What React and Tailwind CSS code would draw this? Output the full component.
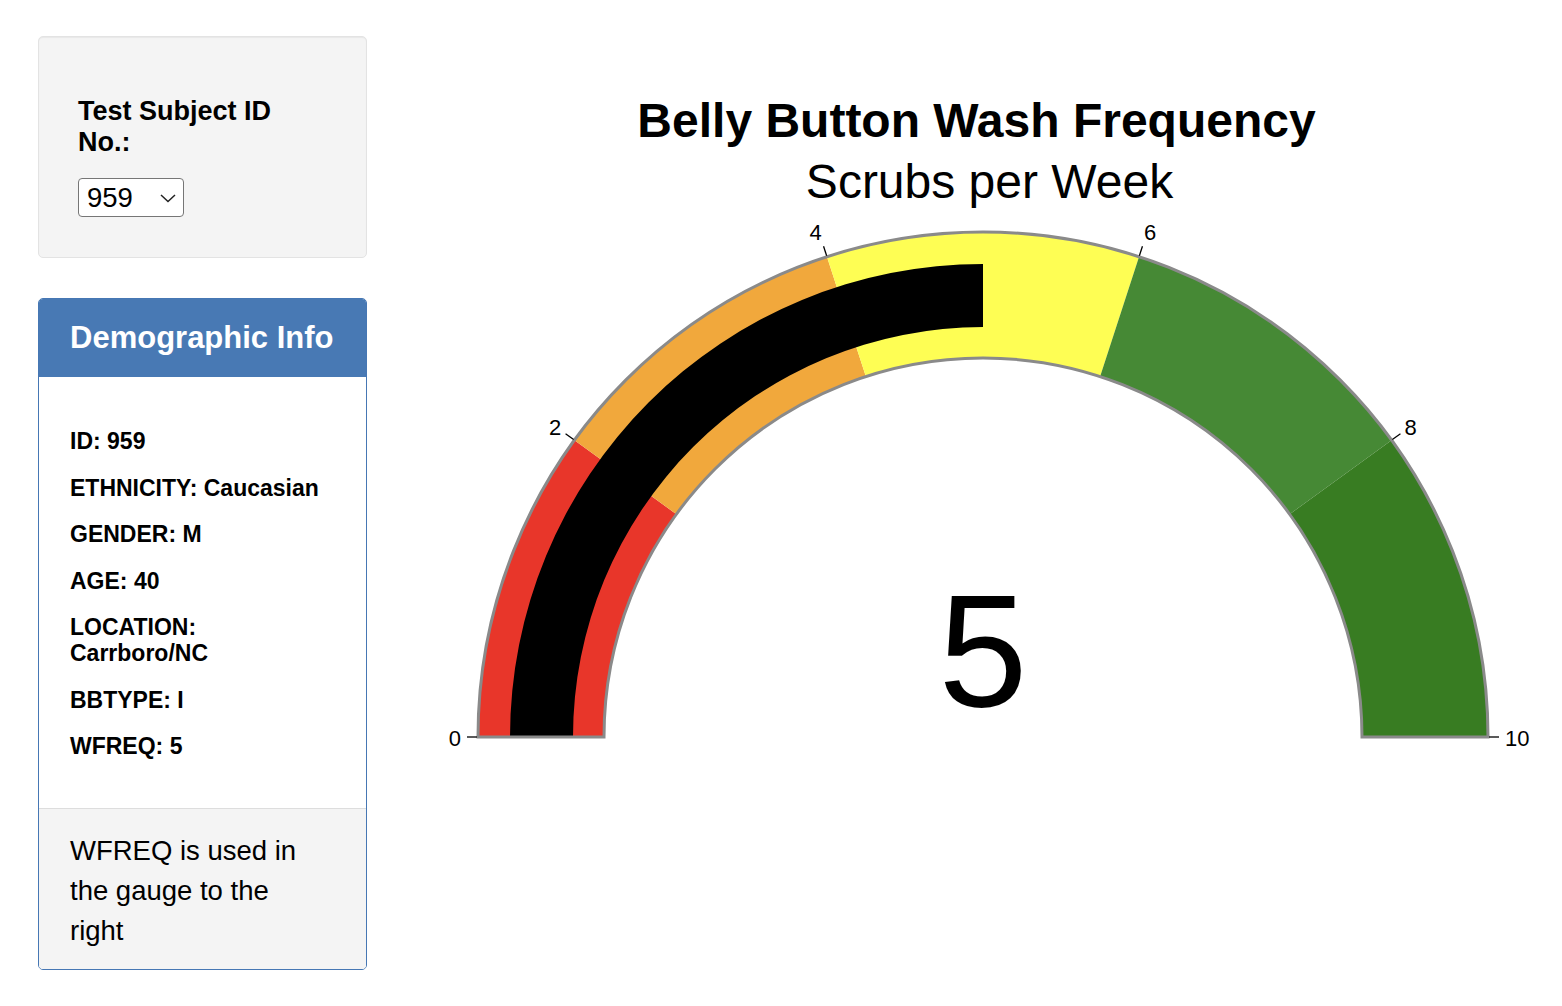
import React from 'react'

const CX = 983
const CY = 737

const pt = (r, v) => {
  const t = Math.PI * (1 - v / 10)
  return [CX + r * Math.cos(t), CY - r * Math.sin(t)]
}

const band = (v0, v1, ri, ro) => {
  const [a, b] = pt(ro, v0)
  const [c, d] = pt(ro, v1)
  const [e, f] = pt(ri, v1)
  const [g, h] = pt(ri, v0)
  return `M${a} ${b} A${ro} ${ro} 0 0 1 ${c} ${d} L${e} ${f} A${ri} ${ri} 0 0 0 ${g} ${h} Z`
}

const steps = [
  { from: 0, to: 2, color: '#e8362a' },
  { from: 2, to: 4, color: '#f1a83c' },
  { from: 4, to: 6, color: '#fefe54' },
  { from: 6, to: 8, color: '#468935' },
  { from: 8, to: 10, color: '#387c22' },
]

const demo = [
  ['ID', '959'],
  ['ETHNICITY', 'Caucasian'],
  ['GENDER', 'M'],
  ['AGE', '40'],
  ['LOCATION', 'Carrboro/NC'],
  ['BBTYPE', 'I'],
  ['WFREQ', '5'],
]

// tick label centres, read off the chart
const labels = [
  { v: 2, x: 555, y: 427 },
  { v: 4, x: 815.5, y: 232.5 },
  { v: 6, x: 1150, y: 232.5 },
  { v: 8, x: 1410.5, y: 427 },
]

const Gauge = () => {
  return (
    <svg width="1165" height="1006" viewBox="397 0 1165 1006" className="block flex-none">
      {/* title */}
      <text x="976.5" y="137" textAnchor="middle" fontSize="48" fontWeight="700" fill="#000">
        Belly Button Wash Frequency
      </text>
      <text x="989.5" y="198" textAnchor="middle" fontSize="48" fill="#000">
        Scrubs per Week
      </text>

      {/* steps */}
      {steps.map((s) => (
        <path key={s.from} d={band(s.from, s.to, 379, 505)} fill={s.color} />
      ))}

      {/* value bar */}
      <path d={band(0, 5, 410, 473)} fill="#000" />

      {/* border */}
      <path d={band(0, 10, 379, 505)} fill="none" stroke="#8a8a8a" strokeWidth="3" />

      {/* ticks */}
      {[0, 2, 4, 6, 8, 10].map((v) => {
        const [x1, y1] = pt(506, v)
        const [x2, y2] = pt(516, v)
        return <line key={v} x1={x1} y1={y1} x2={x2} y2={y2} stroke="#000" strokeWidth="1.3" />
      })}
      <text x="461" y="738" textAnchor="end" dominantBaseline="central" fontSize="22" fill="#000">0</text>
      <text x="1505" y="738" textAnchor="start" dominantBaseline="central" fontSize="22" fill="#000">10</text>
      {labels.map((l) => (
        <text key={l.v} x={l.x} y={l.y} textAnchor="middle" dominantBaseline="central" fontSize="22" fill="#000">
          {l.v}
        </text>
      ))}

      {/* number */}
      <text x="983" y="706" textAnchor="middle" fontSize="160" fill="#000">5</text>
    </svg>
  )
}

const App = () => {
  return (
    <div className="flex w-[1562px] h-[1006px] overflow-hidden bg-white text-black font-['Liberation_Sans',Arial,sans-serif]">
      {/* LEFT COLUMN */}
      <div className="ml-[38px] mt-[36px] w-[329px] flex-none flex flex-col">
        {/* selector well */}
        <div className="bg-[#f4f4f4] border border-[#e3e3e3] rounded-[5px] pt-[59px] pb-[40px] px-[39px] shadow-[inset_0_1px_1px_rgba(0,0,0,0.05)]">
          <h5 className="text-[27px] leading-[31px] font-bold">Test Subject ID No.:</h5>
          <div className="relative mt-[20px] w-[106px] h-[39px]">
            <select
              defaultValue="959"
              className="appearance-none w-full h-full bg-white border border-[#767676] rounded-[4px] pl-[8px] text-[27.5px] leading-none outline-none"
            >
              <option value="959">959</option>
            </select>
            <svg className="absolute right-[8px] top-[16px] pointer-events-none" width="16" height="9" viewBox="0 0 16 9">
              <path d="M1 1 L8 7.5 L15 1" fill="none" stroke="#222" strokeWidth="1.5" />
            </svg>
          </div>
        </div>

        {/* demographic panel */}
        <div className="mt-[40px] border border-[#4677b4] rounded-[5px] overflow-hidden">
          <div className="bg-[#4879b4] h-[78px] flex items-center px-[31px]">
            <h3 className="text-white text-[31px] font-bold">Demographic Info</h3>
          </div>
          <div className="bg-white pt-[51px] pb-[49px] px-[31px] flex flex-col gap-[20.5px]">
            {demo.map(([k, v]) => (
              <h6 key={k} className="text-[23px] leading-[26px] font-bold">
                {k}: {v}
              </h6>
            ))}
          </div>
          <div className="bg-[#f4f4f4] border-t border-[#dddddd] pt-[22px] pb-[18px] px-[31px]">
            <p className="w-[250px] text-[27.5px] leading-[40px]">WFREQ is used in the gauge to the right</p>
          </div>
        </div>
      </div>

      {/* GAUGE */}
      <div className="ml-[30px] flex-none">
        <Gauge />
      </div>
    </div>
  )
}

export default App
